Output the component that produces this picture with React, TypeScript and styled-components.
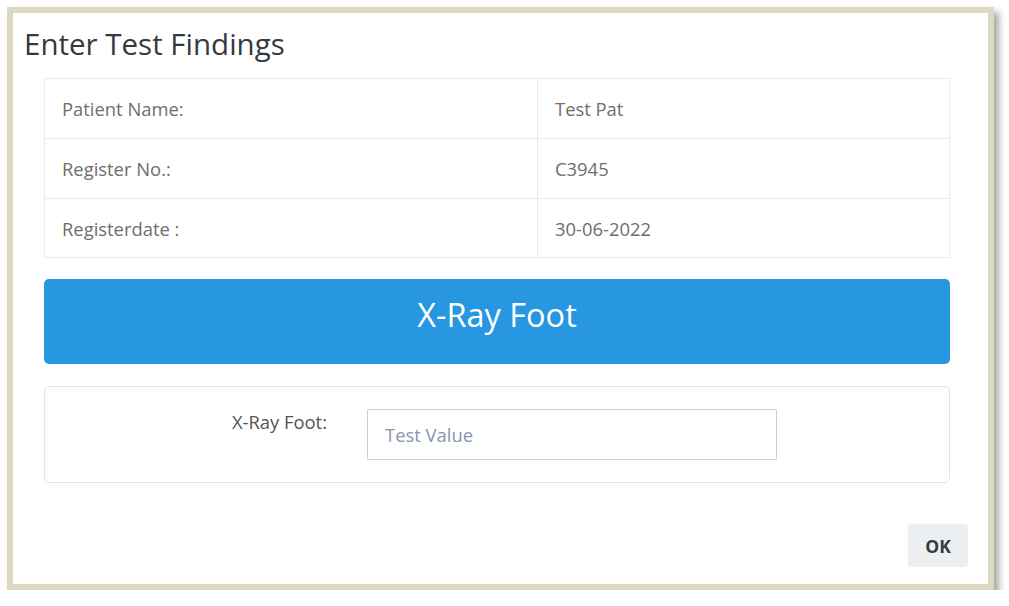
import React from "react";
import styled, { createGlobalStyle } from "styled-components";

const GlobalStyle = createGlobalStyle`
  html, body {
    margin: 0;
    padding: 0;
    background: #ffffff;
    font-family: "Open Sans", "Liberation Sans", sans-serif;
  }
`;

const rows = [
  { label: "Patient Name:", value: "Test Pat" },
  { label: "Register No.:", value: "C3945" },
  { label: "Registerdate :", value: "30-06-2022" },
];

export default function App() {
  return (
    <>
      <GlobalStyle />
      <Frame>
        <Title>Enter Test Findings</Title>
        <Content>
          <InfoTable>
            <tbody>
              {rows.map((row) => (
                <tr key={row.label}>
                  <LabelCell>{row.label}</LabelCell>
                  <ValueCell>{row.value}</ValueCell>
                </tr>
              ))}
            </tbody>
          </InfoTable>
          <Banner>X-Ray Foot</Banner>
          <FormBox>
            <FieldLabel htmlFor="xray-foot">X-Ray Foot:</FieldLabel>
            <Input id="xray-foot" placeholder="Test Value" />
          </FormBox>
        </Content>
        <Footer>
          <OkButton>OK</OkButton>
        </Footer>
      </Frame>
    </>
  );
}

const Frame = styled.div`
  box-sizing: border-box;
  margin: 7px 0 0 7px;
  width: 987px;
  height: 583px;
  border: 6px solid #ddd8c1;
  background: #ffffff;
  box-shadow: 5px 5px 7px rgba(0, 0, 0, 0.35);
  display: flex;
  flex-direction: column;
`;

const Title = styled.h1`
  margin: 11px 0 0 11px;
  font-size: 29.5px;
  font-weight: 400;
  line-height: 40px;
  color: #343a40;
`;

const Content = styled.div`
  padding: 14px 38px 0 31px;
  display: flex;
  flex-direction: column;
`;

const InfoTable = styled.table`
  width: 100%;
  border-collapse: collapse;
  border: 1px solid #e5ebf1;

  td {
    border: 1px solid #e5ebf1;
    height: 59px;
    padding: 0 17px;
    font-size: 18.4px;
    color: #6e6e6e;
  }

  tr:last-child td {
    height: 58px;
  }
`;

const LabelCell = styled.td`
  width: 458px;
`;

const ValueCell = styled.td``;

const Banner = styled.div`
  margin-top: 21px;
  height: 85px;
  border-radius: 5px;
  background: #2697e0;
  color: #ffffff;
  font-size: 32.5px;
  display: flex;
  align-items: center;
  justify-content: center;
  padding-bottom: 14px;
  box-sizing: border-box;
`;

const FormBox = styled.div`
  margin-top: 22px;
  box-sizing: border-box;
  height: 97px;
  border: 1px solid #e2e4e6;
  border-radius: 5px;
  padding-top: 22px;
  display: grid;
  grid-template-columns: 282px 410px;
  column-gap: 40px;
  align-items: start;
`;

const FieldLabel = styled.label`
  text-align: right;
  font-size: 18.4px;
  line-height: 26px;
  color: #555555;
`;

const Input = styled.input`
  box-sizing: border-box;
  height: 51px;
  width: 410px;
  border: 1px solid #c9d1e1;
  border-radius: 1px;
  padding: 0 17px;
  font-family: "Open Sans", "Liberation Sans", sans-serif;
  font-size: 18.4px;
  color: #333;
  outline: none;

  &::placeholder {
    color: #8896ad;
  }
`;

const Footer = styled.div`
  margin-top: auto;
  display: flex;
  justify-content: flex-end;
  padding: 0 20px 17px 0;
`;

const OkButton = styled.button`
  width: 60px;
  height: 43px;
  border: none;
  border-radius: 4px;
  background: #eceff1;
  color: #333a40;
  font-family: "Open Sans", "Liberation Sans", sans-serif;
  font-size: 17.5px;
  font-weight: 700;
`;
